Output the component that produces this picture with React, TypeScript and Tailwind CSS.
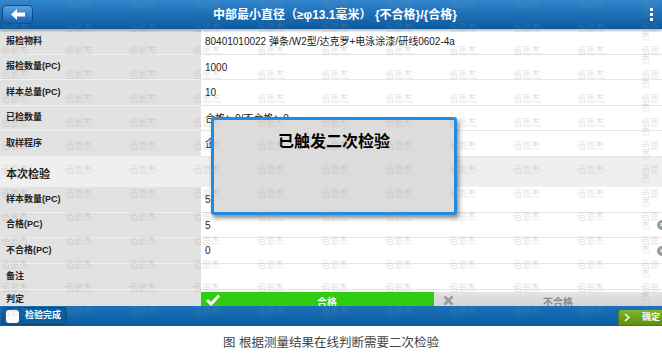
import React from "react";

const topRows = [
  { label: "报检物料", value: "80401010022 弹条/W2型/达克罗+电泳涂漆/研线0602-4a", h: "h-[26px]" },
  { label: "报检数量(PC)", value: "1000", h: "h-[25px]" },
  { label: "样本总量(PC)", value: "10", h: "h-[26px]" },
  { label: "已检数量", value: "合格：0/不合格：0", h: "h-[25px]" },
  { label: "取样程序", value: "企业标准抽样", h: "h-[26px]" },
];

const bottomRows = [
  { label: "样本数量(PC)", value: "5", clear: false, h: "h-[26px]" },
  { label: "合格(PC)", value: "5", clear: true, h: "h-[25px]" },
  { label: "不合格(PC)", value: "0", clear: true, h: "h-[26px]" },
  { label: "备注", value: "", clear: false, h: "h-[26px]" },
];

function Watermark() {
  const rows = Array.from({ length: 14 });
  const cols = Array.from({ length: 11 });
  return (
    <div className="pointer-events-none absolute inset-0 overflow-hidden">
      {rows.map((_, r) =>
        cols.map((_, c) => (
          <span
            key={`${r}-${c}`}
            className="absolute text-[9px] leading-none text-[#8a8a8a]/[0.28]"
            style={{ left: 1 + c * 64, top: r * 23.7 }}
          >
            佰思杰
          </span>
        ))
      )}
    </div>
  );
}

function Row({ label, value, h, clear }: { label: string; value: string; h: string; clear?: boolean }) {
  return (
    <div className={`flex shrink-0 ${h}`}>
      <div className="flex w-[201px] shrink-0 items-center border-b border-[#f2f2f2] bg-[#e2e2e2] pl-[6px] text-[9px] font-semibold text-[#222]">
        {label}
      </div>
      <div className="relative flex flex-1 items-center border-b border-[#e6e6e6] bg-white pl-[4px] text-[10px] text-[#222]">
        {value}
        {clear && (
          <span className="absolute right-[-5px] top-1/2 flex h-[10px] w-[10px] -translate-y-1/2 items-center justify-center rounded-full bg-[#9a9a9a] text-[8px] font-bold leading-none text-white">
            ×
          </span>
        )}
      </div>
    </div>
  );
}

export default function App() {
  return (
    <div className="flex h-[362px] w-[662px] flex-col bg-white font-['Liberation_Sans','Noto_Sans_CJK_SC',sans-serif]">
      <div className="relative flex h-[326px] flex-col overflow-hidden bg-white">
        {/* header */}
        <div className="relative z-10 flex h-[29px] shrink-0 items-center bg-gradient-to-b from-[#2f86cf] to-[#0b5a9f] shadow-[0_2px_2px_rgba(0,0,0,0.25)]">
          <button className="ml-[2px] flex h-[19px] w-[31px] items-center justify-center rounded-[4px] border border-[#0b4c88] bg-gradient-to-b from-[#58a4e6] to-[#1463ad]">
            <svg width="14" height="11" viewBox="0 0 14 11">
              <path d="M0 5.5 L6 0 L6 3.5 L14 3.5 L14 7.5 L6 7.5 L6 11 Z" fill="white" />
            </svg>
          </button>
          <div className="absolute left-[213px] text-[12px] font-bold text-white">
            中部最小直径（≥φ13.1毫米） {"{不合格}/{合格}"}
          </div>
          <div className="absolute right-[9px] flex flex-col gap-[2px]">
            <span className="h-[3px] w-[3px] bg-white" />
            <span className="h-[3px] w-[3px] bg-white" />
            <span className="h-[3px] w-[3px] bg-white" />
          </div>
        </div>

        {/* form */}
        <div className="flex flex-1 flex-col overflow-hidden">
          {topRows.map((r) => (
            <Row key={r.label} label={r.label} value={r.value} h={r.h} />
          ))}
          <div className="flex h-[30px] shrink-0 items-end bg-[#efefef] pb-[5px] pl-[6px] text-[11px] font-semibold text-[#222]">
            本次检验
          </div>
          {bottomRows.map((r) => (
            <Row key={r.label} label={r.label} value={r.value} h={r.h} clear={r.clear} />
          ))}
          <div className="flex h-[16px] shrink-0 overflow-hidden">
            <div className="flex w-[201px] shrink-0 items-end bg-[#e2e2e2] pl-[6px] text-[9px] font-semibold text-[#222]">
              判定
            </div>
            <div className="flex flex-1 pt-[2px]">
              <div className="flex h-[24px] w-[233px] items-start bg-[#2ecd12] pt-[2px]">
                <svg className="ml-[5px]" width="14" height="12" viewBox="0 0 14 12">
                  <path d="M1 6 L5 10 L13 1.5" stroke="white" strokeWidth="3" fill="none" />
                </svg>
                <span className="flex-1 pt-[1px] text-center text-[10px] font-bold text-white">合格</span>
              </div>
              <div className="flex h-[24px] flex-1 items-start bg-gradient-to-b from-[#e4e4e4] to-[#c9c9c9] pt-[3px]">
                <svg className="ml-[9px]" width="11" height="11" viewBox="0 0 11 11">
                  <path d="M1.5 1.5 L9.5 9.5 M9.5 1.5 L1.5 9.5" stroke="#9a9a9a" strokeWidth="2.5" />
                </svg>
                <span className="flex-1 text-center text-[10px] font-bold text-[#8a8a8a]">不合格</span>
              </div>
            </div>
          </div>
        </div>

        {/* bottom bar */}
        <div className="flex h-[20px] shrink-0 items-center justify-between bg-gradient-to-b from-[#1a72bb] to-[#0a5b9e]">
          <div className="ml-[2px] flex h-[18px] w-[65px] items-center gap-[6px] rounded-[3px] border border-[#0a4a80] bg-[#0d5c9c] pl-[3px]">
            <span className="h-[13px] w-[13px] rounded-[3px] bg-white" />
            <span className="text-[9px] font-bold text-white">检验完成</span>
          </div>
          <div className="mr-[-10px] flex h-[17px] w-[54px] shrink-0 items-center gap-[12px] self-end rounded-tl-[3px] border border-[#4a7a10] bg-gradient-to-b from-[#7fb52a] to-[#5a8f12] pl-[5px]">
            <svg width="6" height="9" viewBox="0 0 6 9">
              <path d="M1 1 L5 4.5 L1 8" stroke="white" strokeWidth="1.5" fill="none" />
            </svg>
            <span className="whitespace-nowrap text-[9px] font-bold text-white">确定</span>
          </div>
        </div>

        {/* dialog */}
        <div className="absolute left-[211px] top-[117px] z-10 flex h-[98px] w-[246px] justify-center rounded-[3px] border-[3px] border-[#1f8ce4] bg-[#dcdcdc] pt-[10px] shadow-[2px_3px_4px_rgba(0,0,0,0.45)]">
          <span className="text-[16px] font-bold text-black">已触发二次检验</span>
        </div>

        <div className="z-20">
          <Watermark />
        </div>
      </div>

      <div className="flex flex-1 items-center justify-center pb-[2px] text-[12.5px] text-[#444]">
        图 根据测量结果在线判断需要二次检验
      </div>
    </div>
  );
}
